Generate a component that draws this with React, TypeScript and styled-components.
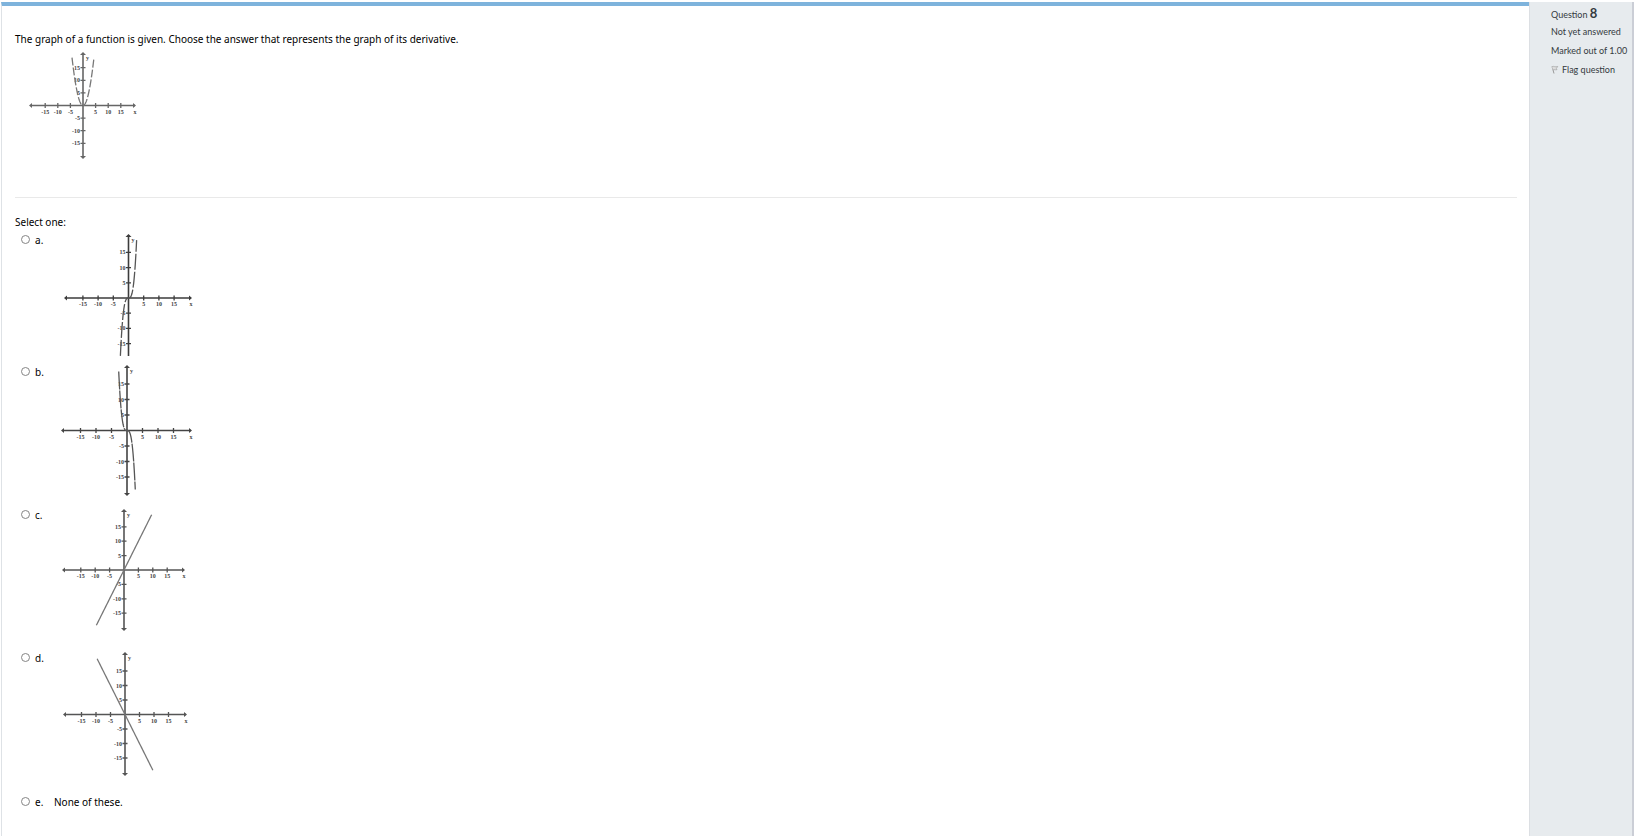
import React from "react";
import styled, { createGlobalStyle } from "styled-components";

const GlobalStyle = createGlobalStyle`
  * { box-sizing: border-box; }
  body {
    margin: 0;
    background: #fff;
    color: #000;
    font-family: "Noto Sans", "Open Sans", sans-serif;
    font-size: 10px;
    line-height: 16px;
  }
`;

const Page = styled.div`
  display: flex;
  min-height: 100vh;
  padding: 2px 0 0 1px;
`;

const Question = styled.main`
  flex: 1;
  min-width: 0;
  padding: 25px 12px 0 13px;
  border-top: 4px solid #7eb3dc;
  border-left: 1px solid #dee2e6;
`;

const Prompt = styled.section`
  height: 167px;
  border-bottom: 1px solid #e9e9e9;
`;

const PromptText = styled.p`
  margin: 0;
`;

const Options = styled.fieldset`
  margin: 16px 0 0;
  padding: 0;
  border: 0;
`;

const Legend = styled.legend`
  display: block;
  padding: 0;
  height: 18px;
`;

const Option = styled.label<{ $height: number }>`
  display: grid;
  grid-template-columns: 20px 19px auto;
  justify-content: start;
  align-items: start;
  height: ${(p) => p.$height}px;
`;

const Radio = styled.input`
  appearance: none;
  width: 9px;
  height: 9px;
  margin: 3px 0 0 6px;
  border: 1px solid #858585;
  border-radius: 50%;
  background: #fff;

  &:checked {
    border-width: 3px;
  }
`;

const Graph = styled.svg`
  display: block;
  overflow: visible;

  text {
    font: bold 6px "Liberation Serif", serif;
    fill: #444;
  }
`;

const Info = styled.aside`
  display: flex;
  flex-direction: column;
  align-items: flex-start;
  width: 105px;
  padding: 4px 0 0 21px;
  border-left: 1px solid #dcdfe3;
  border-right: 2px solid #cbced6;
  background: #e7ebee;
  color: #343a40;
  font-family: Lato, sans-serif;
  font-size: 9px;
  line-height: 19px;
  white-space: nowrap;
`;

const InfoLine = styled.div``;

const Number = styled.h2`
  margin: 0;
  font-size: 9px;
  font-weight: 400;
  line-height: 15px;

  strong {
    font-size: 13px;
    font-weight: 700;
  }
`;

const FlagButton = styled.button`
  display: flex;
  align-items: center;
  gap: 3px;
  padding: 0;
  border: 0;
  background: none;
  color: inherit;
  font: inherit;
  cursor: pointer;
`;

type Point = [number, number];

interface PlotData {
  title: string;
  width: number;
  height: number;
  origin: Point;
  step: number;
  xRange: Point;
  yRange: Point;
  fn: (x: number) => number;
  domain: Point;
  axis: string;
  curve: string;
  dashes?: string;
  openBottom?: boolean;
}

const TICKS = [-15, -10, -5, 5, 10, 15];

function Plot({ plot }: { plot: PlotData }) {
  const { origin: [ox, oy], step, xRange, yRange, fn, domain, axis } = plot;
  const unit = step / 5;
  const points = Array.from({ length: 61 }, (_, i) => {
    const x = domain[0] + ((domain[1] - domain[0]) * i) / 60;
    return `${ox + x * unit},${oy - fn(x) * unit}`;
  }).join(" ");
  return (
    <Graph width={plot.width} height={plot.height} role="img" aria-label={plot.title}>
      <g stroke={axis} strokeWidth={1.6} fill="none">
        <path d={`M${xRange[0]} ${oy}H${xRange[1]}M${ox} ${yRange[0]}V${yRange[1]}`} />
        {TICKS.map((t) => (
          <path
            key={t}
            strokeWidth={1.3}
            d={`M${ox + t * unit} ${oy - 2.5}v5M${ox - 2.5} ${oy - t * unit}h5`}
          />
        ))}
      </g>
      <g fill={axis}>
        <path d={`M${xRange[0] - 2} ${oy}l3 -2.6v5.2z`} />
        <path d={`M${xRange[1] + 1} ${oy}l-3 -2.6v5.2z`} />
        <path d={`M${ox} ${yRange[0] - 1}l-3 3h6z`} />
        {!plot.openBottom && <path d={`M${ox} ${yRange[1] + 1}l-3 -3h6z`} />}
      </g>
      {TICKS.map((t) => (
        <React.Fragment key={t}>
          <text x={ox + t * unit} y={oy + 8} textAnchor="middle">{t}</text>
          <text x={ox - 3} y={oy - t * unit + 2} textAnchor="end">{t}</text>
        </React.Fragment>
      ))}
      <text x={xRange[1]} y={oy + 8} textAnchor="middle">x</text>
      <text x={ox + 3} y={yRange[0] + 7}>y</text>
      <polyline
        points={points}
        fill="none"
        stroke={plot.curve}
        strokeWidth={1.3}
        strokeDasharray={plot.dashes}
      />
    </Graph>
  );
}

const promptPlot: PlotData = {
  title: "Parabola opening upward",
  width: 130, height: 115, origin: [68, 58.5], step: 12.6,
  xRange: [16, 120], yRange: [6, 111],
  fn: (x) => x * x, domain: [-4.36, 4.36], axis: "#666", curve: "#777", dashes: "8 2",
};

const options: { letter: string; height: number; plot?: PlotData; text?: string }[] = [
  {
    letter: "a", height: 132,
    plot: {
      title: "Increasing cubic curve",
      width: 150, height: 126, origin: [74.5, 66], step: 15.2,
      xRange: [12, 137], yRange: [3, 124],
      fn: (x) => x ** 3, domain: [-2.67, 2.67], axis: "#3c3c3c", curve: "#555", dashes: "16 2", openBottom: true,
    },
  },
  {
    letter: "b", height: 143,
    plot: {
      title: "Decreasing cubic curve",
      width: 150, height: 136, origin: [73, 66.5], step: 15.5,
      xRange: [9, 137], yRange: [2, 131],
      fn: (x) => -(x ** 3), domain: [-2.67, 2.67], axis: "#444", curve: "#555", dashes: "18 1",
    },
  },
  {
    letter: "c", height: 143,
    plot: {
      title: "Line with positive slope",
      width: 150, height: 130, origin: [70, 63], step: 14.4,
      xRange: [10, 130], yRange: [3, 123],
      fn: (x) => 2 * x, domain: [-9.6, 9.6], axis: "#555", curve: "#777",
    },
  },
  {
    letter: "d", height: 144,
    plot: {
      title: "Line with negative slope",
      width: 150, height: 130, origin: [71, 64.5], step: 14.5,
      xRange: [11, 132], yRange: [3, 125],
      fn: (x) => -2 * x, domain: [-9.6, 9.6], axis: "#555", curve: "#777",
    },
  },
  { letter: "e", height: 24, text: "None of these." },
];

export default function App() {
  return (
    <>
      <GlobalStyle />
      <Page>
        <Question>
          <Prompt>
            <PromptText>
              The graph of a function is given. Choose the answer that represents the graph of its derivative.
            </PromptText>
            <Plot plot={promptPlot} />
          </Prompt>
          <Options>
            <Legend>Select one:</Legend>
            {options.map((o) => (
              <Option key={o.letter} $height={o.height}>
                <Radio type="radio" name="answer" value={o.letter} />
                <span>{o.letter}.</span>
                {o.plot ? <Plot plot={o.plot} /> : <span>{o.text}</span>}
              </Option>
            ))}
          </Options>
        </Question>
        <Info>
          <Number>
            Question <strong>8</strong>
          </Number>
          <InfoLine>Not yet answered</InfoLine>
          <InfoLine>Marked out of 1.00</InfoLine>
          <FlagButton type="button">
            <svg width="8" height="9" viewBox="0 0 8 9" fill="none" stroke="#999" aria-hidden="true">
              <path d="M1 1.5L3 8.5" />
              <path d="M1 1.8C3 .6 4 2.6 6.8 1.4L5.4 3.4L6 4.6C4.4 5.4 3.6 4 2 5" fill="#ddd" strokeWidth=".6" />
            </svg>
            Flag question
          </FlagButton>
        </Info>
      </Page>
    </>
  );
}
